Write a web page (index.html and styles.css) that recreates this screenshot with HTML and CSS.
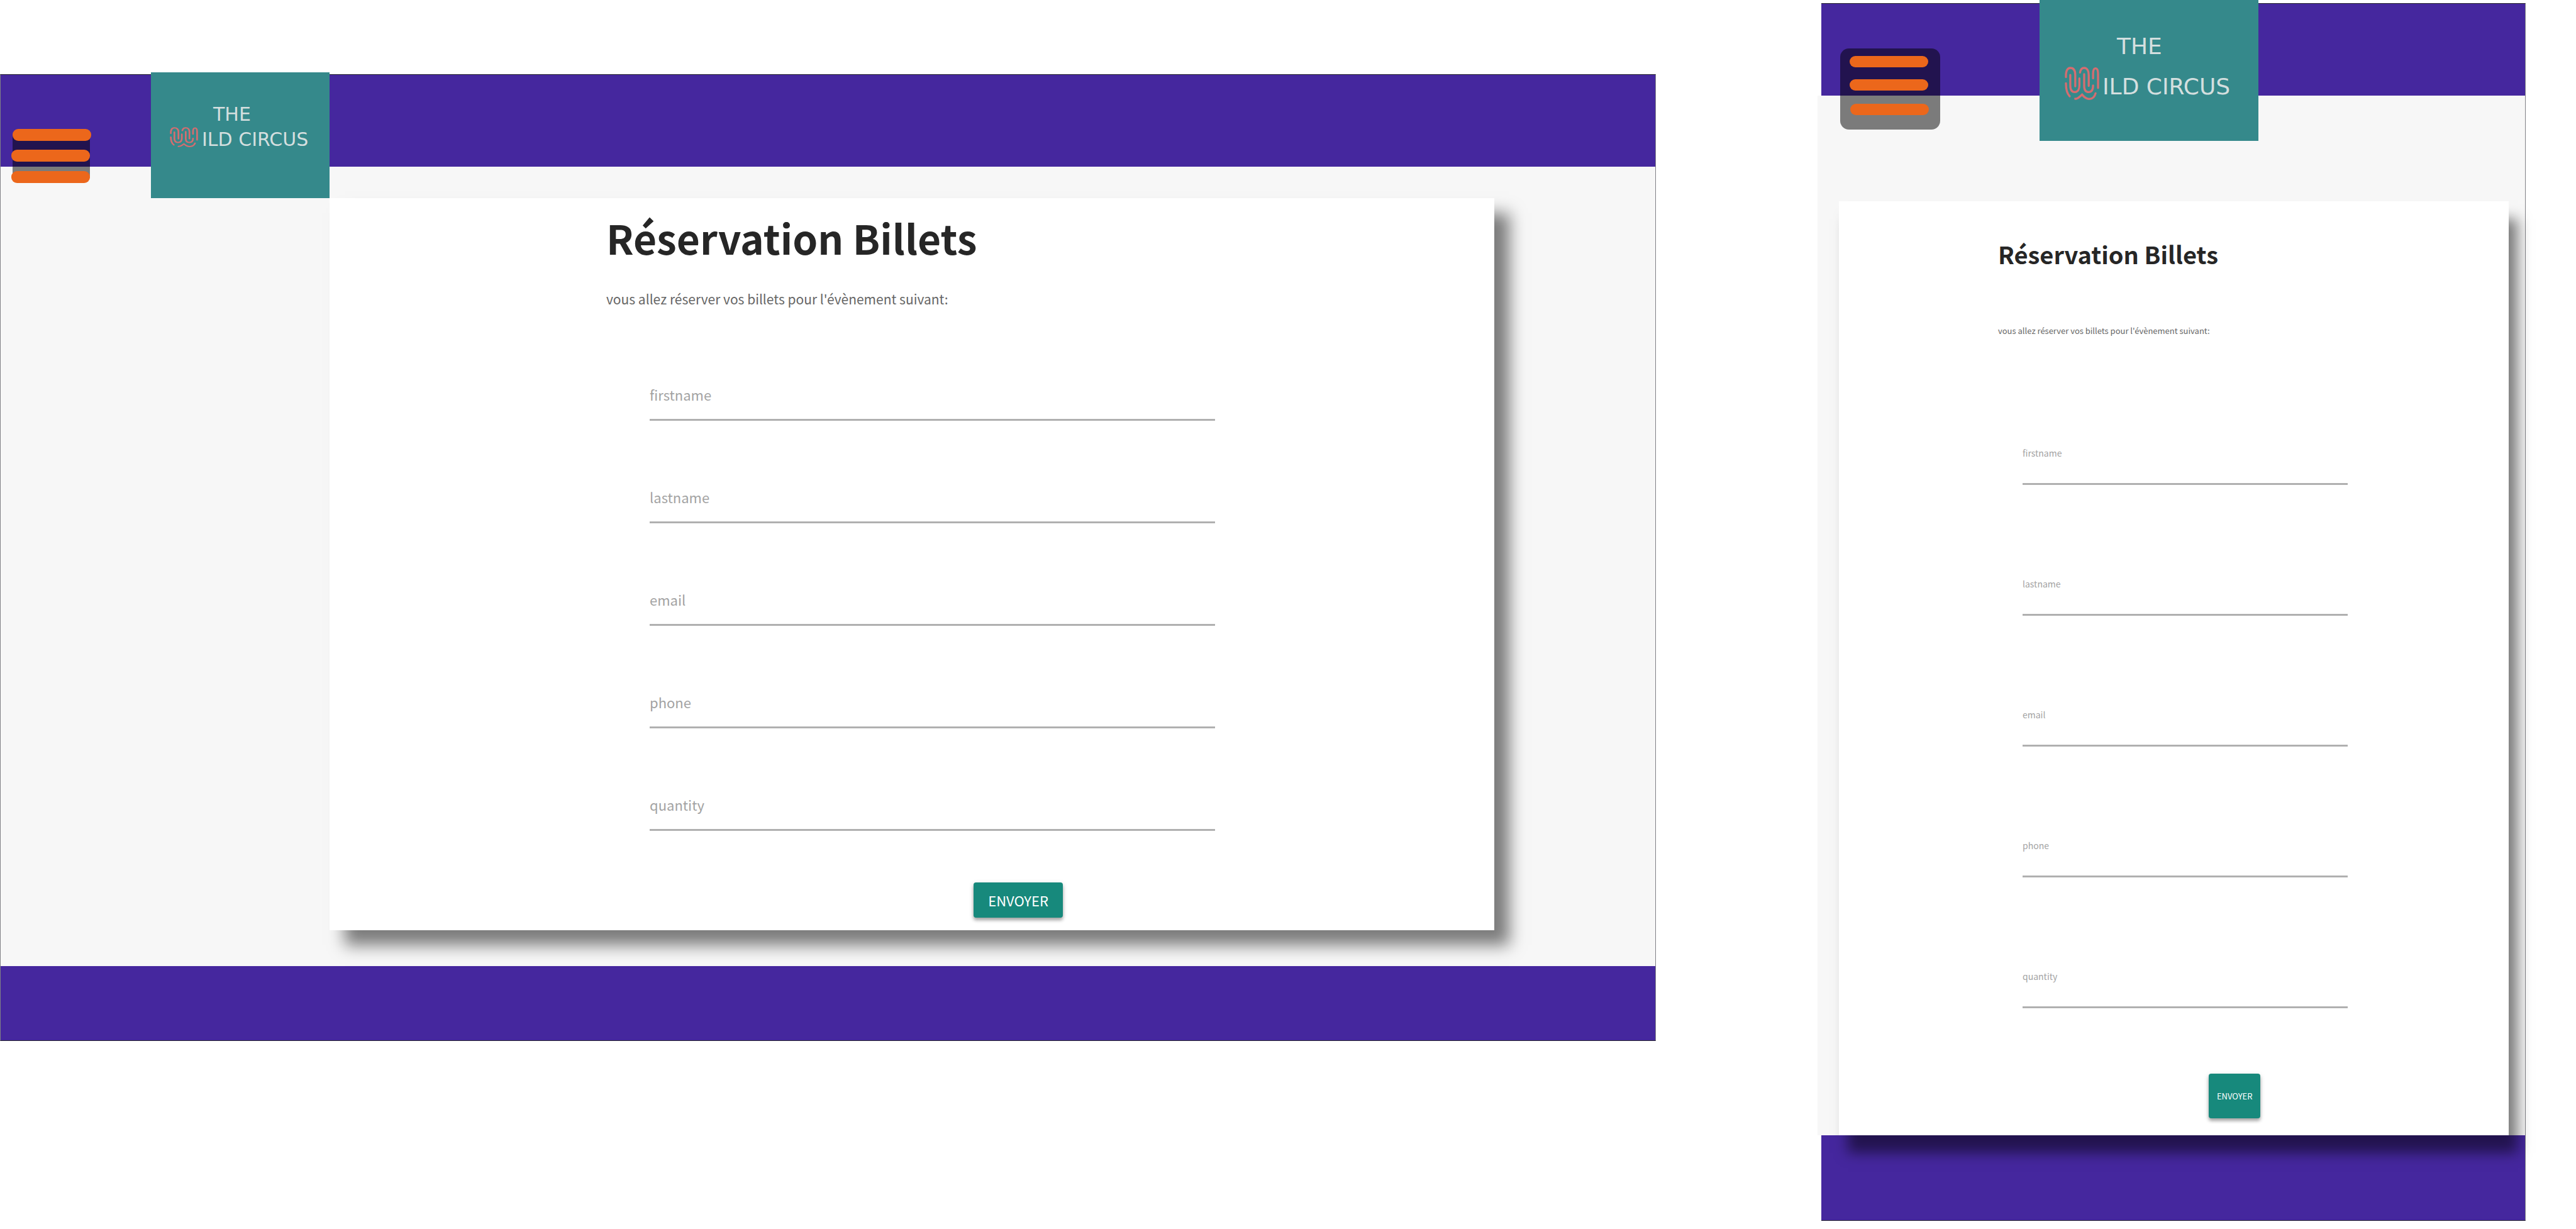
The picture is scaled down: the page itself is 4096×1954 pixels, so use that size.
FILE: index.html
```html
<!DOCTYPE html>
<html lang="fr">
<head>
<meta charset="utf-8">
<title>The Wild Circus - Réservation Billets</title>
<link rel="stylesheet" href="styles.css">
</head>
<body>
<svg class="defs" aria-hidden="true">
  <symbol id="wild-w" viewBox="0 0 167 160" preserveAspectRatio="none">
    <g fill="none" stroke="#d56d70" stroke-width="10" stroke-linecap="round">
      <path d="M6 50C5 22 12 6 27 6C44 6 51 20 51 40V94"/>
      <path d="M27 40V90C27 112 33 122 48 122C64 122 71 108 71 90V56"/>
      <path d="M74 28C76 14 84 6 94 6C108 6 116 20 116 40V92"/>
      <path d="M94 36V92C94 112 102 122 116 122C130 122 137 110 137 90"/>
      <path d="M137 56V34C137 16 142 8 149 8C157 8 161 18 161 36V102"/>
      <path d="M6 80C6 110 12 130 24 142"/>
      <path d="M51 154C64 156 72 144 84 134C92 144 102 155 118 155C136 155 145 144 149 128"/>
    </g>
  </symbol>
</svg>
<div class="boards">
  <section class="screen desktop">
    <header class="topbar">
      <button class="menu" type="button" aria-label="Menu">
        <svg width="129" height="86" viewBox="0 0 129 86">
          <rect x="2" y="8" width="123" height="70" fill="#000" fill-opacity=".5"/>
          <g fill="#ec671b">
            <rect x="2" y="0" width="125" height="19" rx="9"/>
            <rect x="0" y="33" width="125" height="19" rx="9"/>
            <rect x="0" y="67" width="125" height="19" rx="9"/>
          </g>
        </svg>
      </button>
      <a class="logo" href="#">
        <span class="logo-top">THE</span>
        <span class="logo-row"><svg class="logo-w" viewBox="0 0 167 160" preserveAspectRatio="none"><use href="#wild-w" width="167" height="160"/></svg><span>ILD CIRCUS</span></span>
      </a>
    </header>
    <main class="content">
      <div class="card">
        <h1 class="title">Réservation Billets</h1>
        <p class="intro">vous allez réserver vos billets pour l'évènement suivant:</p>
        <form class="form">
          <div class="field"><label for="d-first">firstname</label><input id="d-first" type="text"></div>
          <div class="field"><label for="d-last">lastname</label><input id="d-last" type="text"></div>
          <div class="field"><label for="d-email">email</label><input id="d-email" type="email"></div>
          <div class="field"><label for="d-phone">phone</label><input id="d-phone" type="tel"></div>
          <div class="field"><label for="d-qty">quantity</label><input id="d-qty" type="text"></div>
          <button class="send" type="submit">ENVOYER</button>
        </form>
      </div>
    </main>
    <footer class="bottombar"></footer>
  </section>

  <section class="screen mobile">
    <header class="topbar">
      <button class="menu" type="button" aria-label="Menu">
        <svg width="159" height="129" viewBox="0 0 159 129">
          <rect width="159" height="129" rx="14" fill="#000" fill-opacity=".5"/>
          <g fill="#ec671b">
            <rect x="15" y="12" width="125" height="18" rx="9"/>
            <rect x="15" y="49" width="125" height="18" rx="9"/>
            <rect x="16" y="88" width="125" height="18" rx="9"/>
          </g>
        </svg>
      </button>
      <a class="logo" href="#">
        <span class="logo-top">THE</span>
        <span class="logo-row"><svg class="logo-w" viewBox="0 0 167 160" preserveAspectRatio="none"><use href="#wild-w" width="167" height="160"/></svg><span>ILD CIRCUS</span></span>
      </a>
    </header>
    <main class="content">
      <div class="card">
        <h1 class="title">Réservation Billets</h1>
        <p class="intro">vous allez réserver vos billets pour l'évènement suivant:</p>
        <form class="form">
          <div class="field"><label for="m-first">firstname</label><input id="m-first" type="text"></div>
          <div class="field"><label for="m-last">lastname</label><input id="m-last" type="text"></div>
          <div class="field"><label for="m-email">email</label><input id="m-email" type="email"></div>
          <div class="field"><label for="m-phone">phone</label><input id="m-phone" type="tel"></div>
          <div class="field"><label for="m-qty">quantity</label><input id="m-qty" type="text"></div>
          <button class="send" type="submit">ENVOYER</button>
        </form>
      </div>
    </main>
    <footer class="bottombar"></footer>
  </section>
</div>
</body>
</html>
```
FILE: styles.css
```css
* { box-sizing: border-box; }

body {
  margin: 0;
  background: #fff;
  font-family: "Noto Sans CJK SC", "Noto Sans", sans-serif;
}

.defs { position: absolute; width: 0; height: 0; }

.boards {
  display: grid;
  grid-template-columns: 2633fr 263fr 1120fr 80fr;
  align-items: start;
}

.screen {
  position: relative;
  border: 1px solid #22222a;
  border-right-color: #808086;
}
.desktop { grid-column: 1; margin-top: 118px; border-left-color: #808086; }
.mobile { grid-column: 3; margin-top: 5px; border-left: 0; }

.topbar { height: 146px; background: #45279e; }

.menu {
  position: absolute;
  padding: 0;
  border: 0;
  background: none;
}
.menu svg { display: block; }
.desktop .menu { left: 17px; top: 86px; }
.mobile .menu { left: 30px; top: 71px; }

.logo {
  position: absolute;
  display: flex;
  flex-direction: column;
  background: #35898b;
  color: #d4dfdf;
  font-family: "DejaVu Sans", sans-serif;
  text-decoration: none;
}
.logo-row { display: flex; white-space: nowrap; }
.logo-w { flex: none; }
.desktop .logo {
  left: 239px;
  top: -4px;
  width: 284px;
  height: 200px;
  padding: 47px 30px 0;
  font-size: 30px;
  line-height: 40px;
}
.desktop .logo-top { padding-left: 69px; }
.desktop .logo-row { gap: 6px; }
.desktop .logo-w { width: 45px; height: 32px; }
.mobile .logo {
  left: 347px;
  top: -6px;
  width: 348px;
  height: 224px;
  padding: 42px 40px 0;
  font-size: 36px;
  line-height: 64px;
}
.mobile .logo-top { padding-left: 83px; }
.mobile .logo-row { gap: 5px; }
.mobile .logo-w { width: 55px; height: 53px; }

.content { display: grid; background: #f7f7f7; }
.desktop .content {
  grid-template-columns: 523fr 1852fr 256fr;
  padding: 50px 0 57px;
}
.mobile .content {
  grid-template-columns: 34fr 1065fr 26fr;
  margin-left: -6px;
  padding-top: 168px;
}

.card {
  grid-column: 2;
  position: relative;
  display: grid;
  align-content: start;
  background: #fff;
}
.desktop .card {
  grid-template-columns: 440fr 69fr 899fr 444fr;
  padding: 12px 0 20px;
  box-shadow: 24px 24px 24px rgba(0, 0, 0, .5);
}
.mobile .card {
  grid-template-columns: 253fr 39fr 517fr 256fr;
  padding: 34px 0 27px;
  box-shadow: 14px 28px 20px rgba(0, 0, 0, .5);
}

.title {
  grid-column: 2 / -1;
  margin: 0;
  color: #262626;
  font-weight: 700;
  line-height: 100px;
}
.intro {
  grid-column: 2 / -1;
  color: #666;
  line-height: 32px;
}
.desktop .title { font-size: 64px; }
.desktop .intro { margin: 32px 0 15px; font-size: 21px; }
.mobile .title { font-size: 38px; }
.mobile .intro { margin: 56px 0 21px; font-size: 13px; }

.form { grid-column: 3; }
.field { display: flex; flex-direction: column; }
.field label { color: #a3a3a3; }
.field input {
  width: 100%;
  padding: 0;
  border: 0;
  border-bottom: 3px solid #b0b0b0;
  border-radius: 0;
  outline: 0;
  background: none;
}
.desktop .field { padding-top: 106px; font-size: 22px; line-height: 30px; }
.desktop .field input { height: 27px; }
.mobile .field { padding-top: 137px; font-size: 14px; line-height: 40px; }
.mobile .field input { height: 31px; }

.send {
  display: block;
  padding: 0;
  border: 0;
  border-radius: 4px;
  background: #17897c;
  color: #fff;
  font-family: inherit;
  box-shadow: 0 4px 5px rgba(0, 0, 0, .3), 0 2px 10px rgba(0, 0, 0, .12);
}
.desktop .send { width: 142px; height: 56px; margin: 82px 0 0 57.3%; font-size: 22px; }
.mobile .send { width: 82px; height: 71px; margin: 104px 0 0 57.3%; font-size: 13px; }

.bottombar { background: #45279e; }
.desktop .bottombar { height: 118px; }
.mobile .bottombar { height: 135px; }
```
